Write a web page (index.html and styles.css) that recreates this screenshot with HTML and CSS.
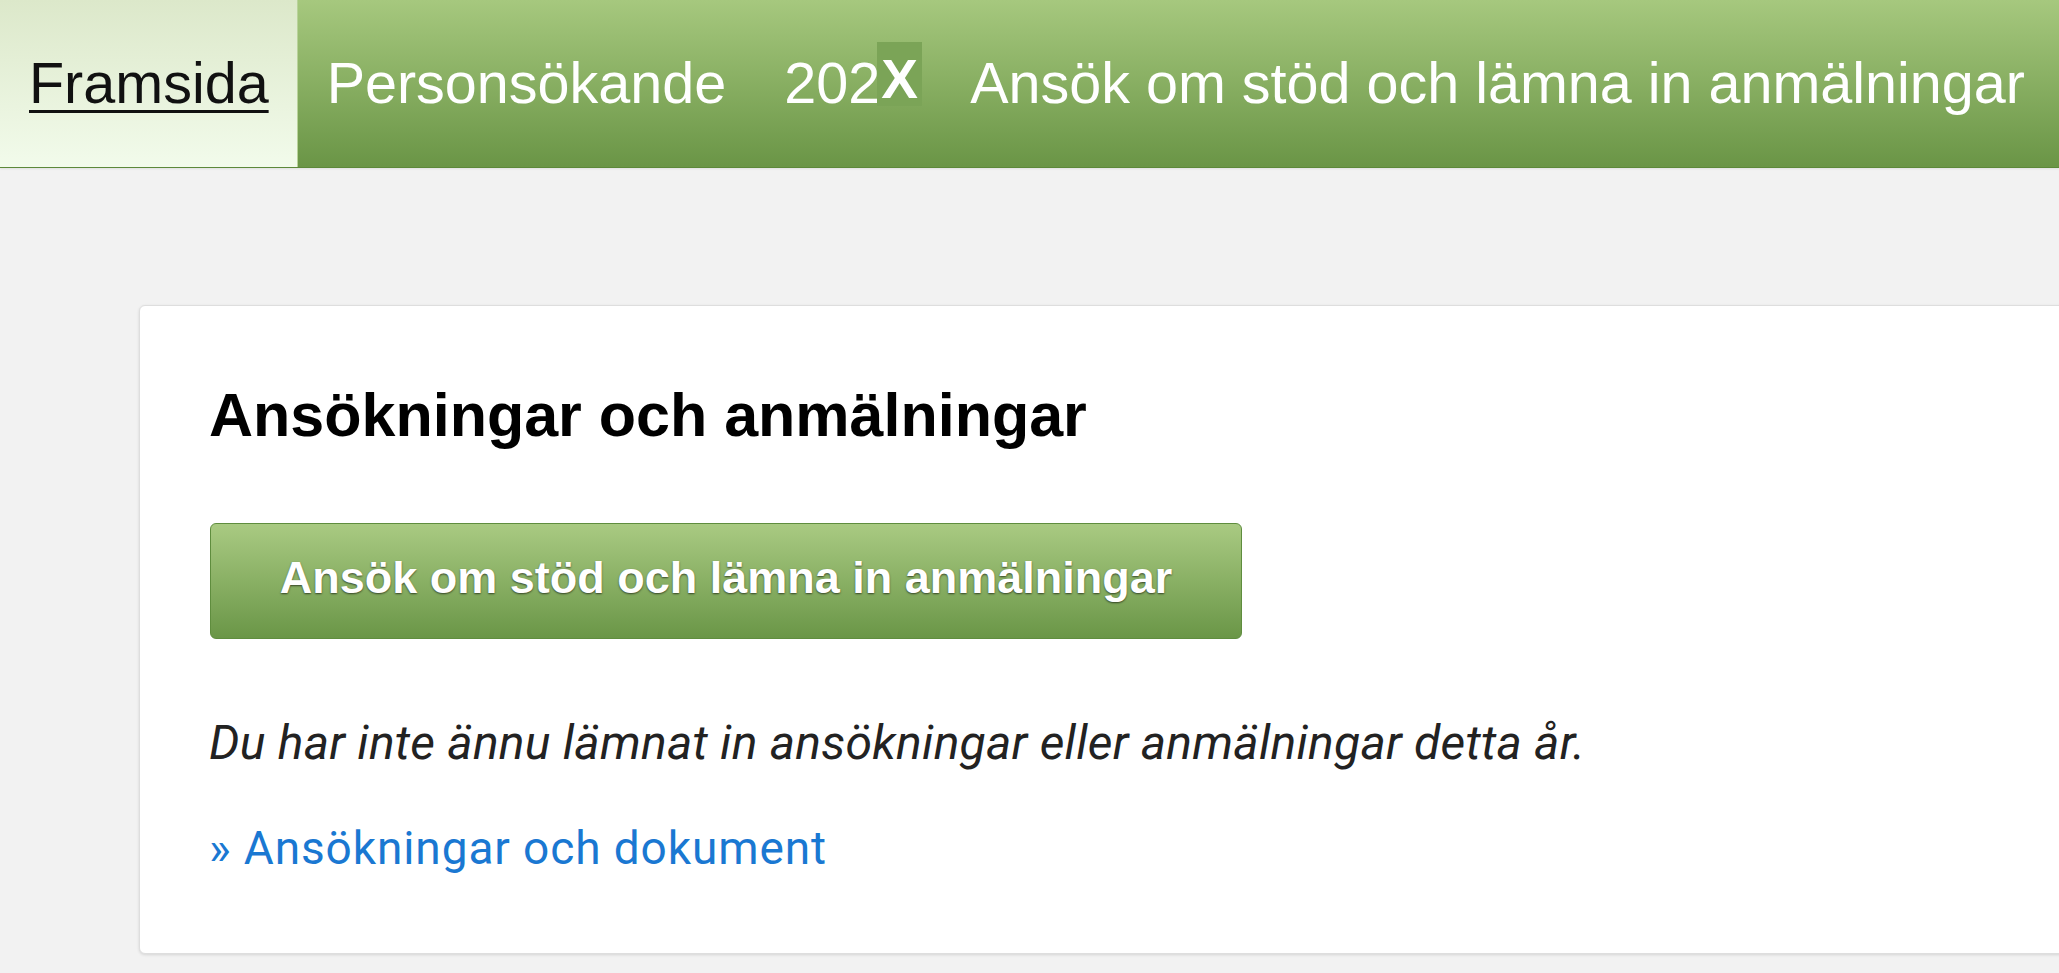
FILE: index.html
```html
<!DOCTYPE html>
<html lang="sv">
<head>
<meta charset="utf-8">
<title>Framsida</title>
<link rel="stylesheet" href="styles.css">
</head>
<body>
<nav class="topnav">
  <a class="nav-item nav-item--active" href="#">Framsida</a>
  <a class="nav-item" href="#">Personsökande</a>
  <a class="nav-item" href="#">202<span class="redacted"><span class="redacted-mask">X</span></span></a>
  <a class="nav-item" href="#">Ansök om stöd och lämna in anmälningar</a>
</nav>
<main class="page">
  <section class="card">
    <h1 class="card-title">Ansökningar och anmälningar</h1>
    <a class="btn-primary" href="#">Ansök om stöd och lämna in anmälningar</a>
    <p class="note">Du har inte ännu lämnat in ansökningar eller anmälningar detta år.</p>
    <a class="more-link" href="#">» Ansökningar och dokument</a>
  </section>
</main>
</body>
</html>
```
FILE: styles.css
```css
html, body {
  margin: 0;
  padding: 0;
}
body {
  background: #f2f2f2;
  font-family: "Liberation Sans", Arial, sans-serif;
  overflow: hidden;
  height: 973px;
}
.topnav {
  display: flex;
  height: 167px;
  background: linear-gradient(#a6c87e, #6a9546);
  border-bottom: 1px solid #5c8839;
  box-shadow: 0 1px 2px rgba(0, 0, 0, 0.08);
}
.nav-item {
  display: block;
  padding: 0 29px;
  font-size: 57.5px;
  line-height: 167px;
  color: #fff;
  text-decoration: none;
  white-space: nowrap;
}
.nav-item--active {
  padding-right: 28px;
  background: linear-gradient(#dce8ca, #f2fbeb);
  color: #111;
  text-decoration: underline;
  text-decoration-thickness: 3px;
  text-underline-offset: 7px;
  border-right: 1px solid #b9d39a;
}
.redacted {
  display: inline-block;
  position: relative;
  width: 32px;
  height: 0;
}
.redacted-mask {
  position: absolute;
  left: -3px;
  bottom: -3px;
  width: 45px;
  height: 64px;
  box-sizing: border-box;
  padding-top: 10px;
  line-height: 54px;
  background: #7ba457;
  color: #fff;
  font-weight: bold;
  font-size: 55px;
  text-align: center;
}
.page {
  padding: 137px 0 0 139px;
}
.card {
  background: #fff;
  border: 1px solid #dedede;
  border-radius: 6px;
  box-shadow: 0 1px 3px rgba(0, 0, 0, 0.12);
  margin-right: -40px;
  padding: 74px 0 79px 69px;
}
.card-title {
  margin: 0;
  font-size: 61px;
  line-height: 70px;
  font-weight: bold;
  color: #000;
}
.btn-primary {
  display: block;
  box-sizing: border-box;
  width: 1032px;
  height: 116px;
  margin: 73px 0 0 1px;
  padding-bottom: 6px;
  border: 1px solid #5f8d3e;
  border-radius: 6px;
  background: linear-gradient(#a9ca82, #6a9647);
  color: #fff;
  font-weight: bold;
  font-size: 45px;
  line-height: 108px;
  text-align: center;
  text-decoration: none;
  text-shadow: 0 1px 2px rgba(0, 0, 0, 0.6);
}
.note {
  margin: 76px 0 0;
  font-family: Roboto, "Liberation Sans", sans-serif;
  font-style: italic;
  font-size: 48px;
  letter-spacing: 0.25px;
  line-height: 56px;
  color: #222;
}
.more-link {
  display: block;
  margin-top: 51px;
  font-family: Roboto, "Liberation Sans", sans-serif;
  font-size: 46px;
  letter-spacing: 0.9px;
  line-height: 52px;
  color: #1a78d2;
  text-decoration: none;
}
```
